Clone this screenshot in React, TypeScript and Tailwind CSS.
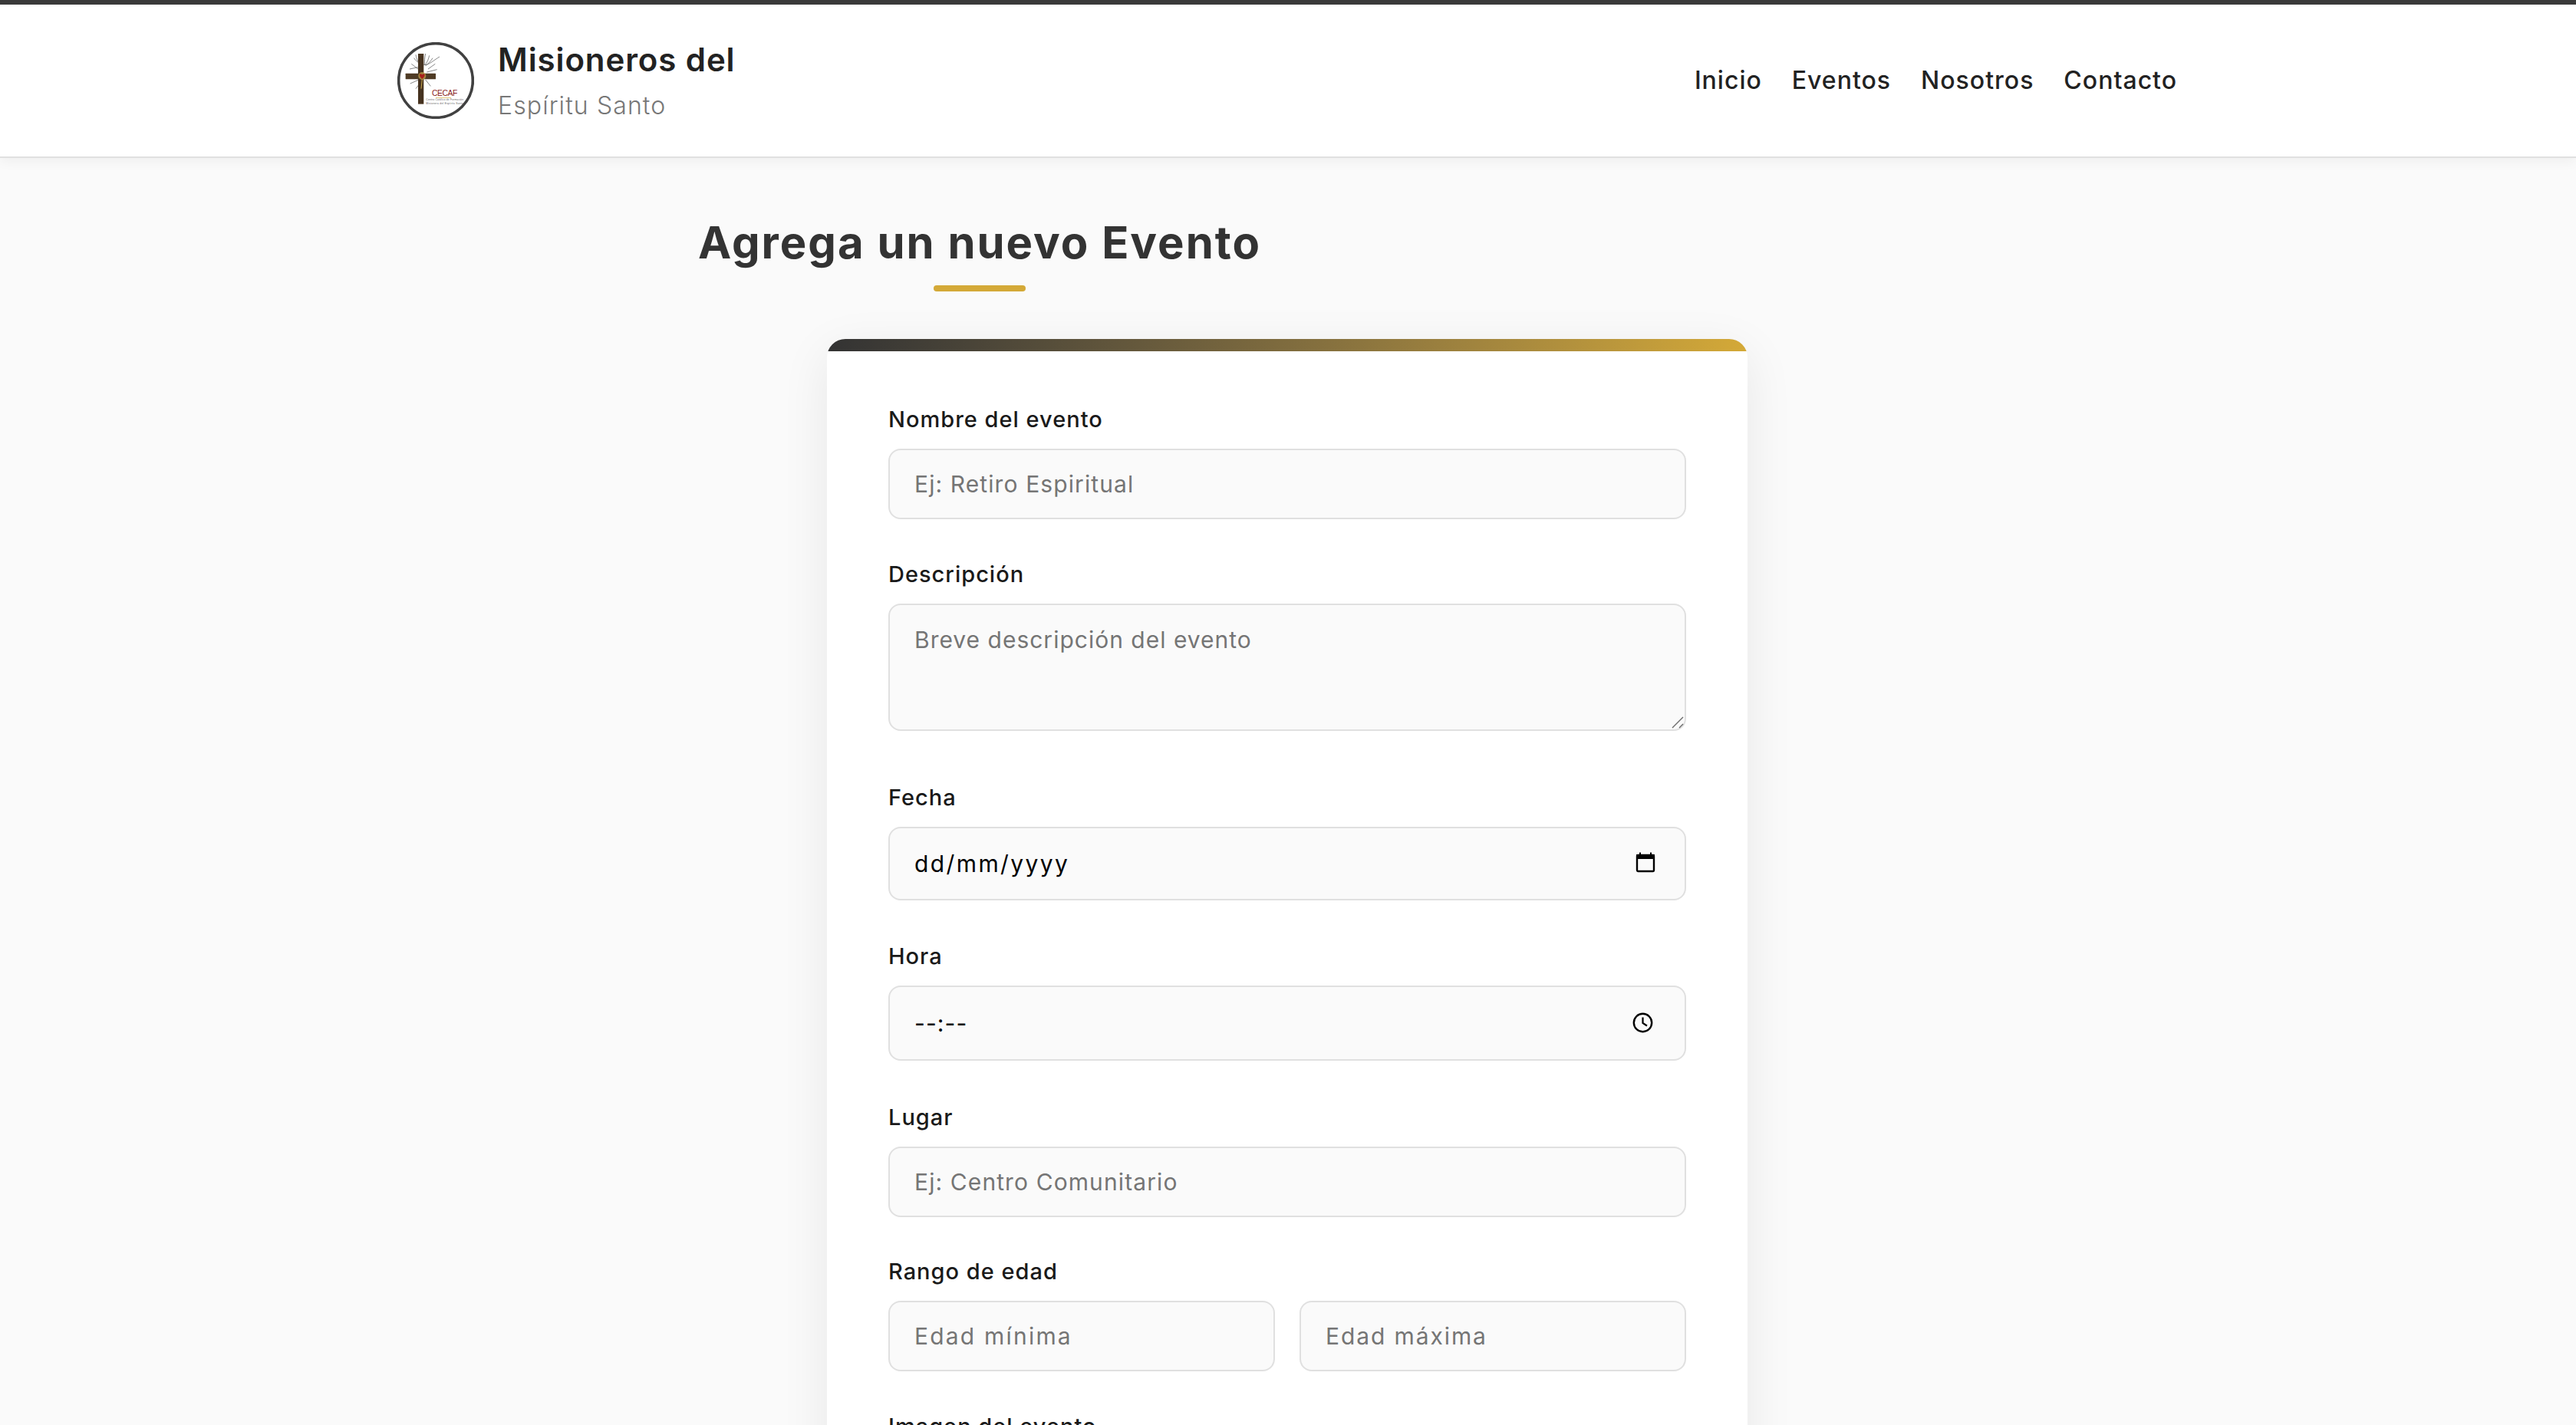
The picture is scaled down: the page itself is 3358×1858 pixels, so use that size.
const FONT = "font-['Inter','Liberation_Sans',sans-serif]";

function Logo() {
  return (
    <svg viewBox="40 43 300 300" className="w-[100px] h-[100px] shrink-0">
      <circle cx="190" cy="193" r="145" fill="#fff" stroke="#414141" strokeWidth="11" />
      <g fill="none" stroke="#4a4a4a" strokeWidth="2">
        <path d="M112 92 C115 110 122 125 135 132 M125 95 C128 112 133 122 140 130 M150 88 C146 105 146 118 146 130 M165 95 C162 110 155 125 147 133 M178 105 C170 118 160 128 150 135" />
        <path d="M105 105 C118 125 135 130 150 132 C165 130 185 112 205 100" />
        <path d="M88 148 L125 140 M95 128 L130 155 M160 148 L188 128 M155 160 L195 150 M90 205 L135 185 M112 225 L135 195 M150 190 L170 215" />
      </g>
      <rect x="121" y="88" width="22" height="197" fill="#4b3722" />
      <rect x="72" y="165" width="118" height="23" rx="2" fill="#4f3b25" />
      <path d="M127 100 V280 M136 95 V282" stroke="#35261a" strokeWidth="2" fill="none" />
      <circle cx="137" cy="175" r="15" fill="#c9a84c" opacity="0.7" />
      <path d="M137 187 C125 178 125 167 131 167 C135 167 137 171 137 171 C137 171 139 167 143 167 C149 167 149 178 137 187 Z" fill="#a8201c" />
      <path d="M137 187 L133 225" stroke="#c9a84c" strokeWidth="3" />
      <text x="175" y="254" fontSize="31" fontFamily="'Liberation Sans',sans-serif" fill="#8a2323" textLength="100">CECAF</text>
      <rect x="190" y="259" width="60" height="2" fill="#d4aa3a" />
      <text x="152" y="272" fontSize="10" fontFamily="'Liberation Sans',sans-serif" fill="#666" textLength="146">Centro Católico de Formación</text>
      <text x="152" y="286" fontSize="10" fontFamily="'Liberation Sans',sans-serif" fill="#666" textLength="146">Misionera del Espíritu Santo</text>
    </svg>
  );
}

function Label({ children }: { children: React.ReactNode }) {
  return <label className="block h-[46px] leading-[47px] mb-[16px] text-[29px] font-medium text-[#1a1a1a] tracking-[1px]">{children}</label>;
}

const inputCls = "w-full h-[92px] px-[32px] bg-[#fafafa] border-2 border-[#e0e0e0] rounded-[16px] text-[30px] tracking-[1.1px] text-black placeholder:text-[#757575] outline-none";

export default function App() {
  return (
    <div className={`h-screen overflow-hidden bg-[#fafafa] ${FONT}`}>
      <header className="relative z-10 h-[206px] border-t-[6px] border-t-[#3a3a3a] border-b-2 border-b-[#e0e0e0] bg-white shadow-[0_4px_16px_rgba(0,0,0,0.05)] pr-[2px]">
        <div className="w-[2400px] h-full mx-auto px-[40px] flex items-center justify-between">
          <div className="flex items-center gap-[31px]">
            <Logo />
            <div>
              <div className="text-[42px] leading-[60px] font-semibold text-[#222] tracking-[0.9px]">Misioneros del</div>
              <div className="text-[32px] leading-[48px] mt-[6px] font-light text-[#777] tracking-[1.1px]">Espíritu Santo</div>
            </div>
          </div>
          <nav className="flex gap-[39px] text-[32px] font-medium text-[#222] tracking-[1px]">
            <a>Inicio</a>
            <a>Eventos</a>
            <a>Nosotros</a>
            <a>Contacto</a>
          </nav>
        </div>
      </header>

      <div className="pr-[2px]">
        <main className="w-[1536px] mx-auto pt-[74px]">
          <h1 className="inline-flex flex-col items-center text-[58px] leading-[72px] font-bold text-[#333] tracking-[2px]">
            Agrega un nuevo Evento
            <span className="block w-[120px] h-[8px] mt-[20px] rounded-[4px] bg-[#d4a937]" />
          </h1>

          <form className="relative w-[1200px] mx-auto mt-[62px] h-[1500px] bg-white rounded-[24px] overflow-hidden px-[80px] pt-[81px] shadow-[0_16px_64px_rgba(0,0,0,0.08)]">
            <div className="absolute top-0 left-0 right-0 h-[16px] bg-gradient-to-r from-[#333333] to-[#d4a937]" />

            <div className="mb-[48px]">
              <Label>Nombre del evento</Label>
              <input className={inputCls} placeholder="Ej: Retiro Espiritual" />
            </div>

            <div className="mb-[63px]">
              <Label>Descripción</Label>
              <div className="relative h-[166px]">
                <textarea className={`${inputCls} !h-[166px] resize-none pt-[23px] block tracking-[1px]`} placeholder="Breve descripción del evento" />
                <svg className="absolute right-[3px] bottom-[3px] w-[16px] h-[16px]" viewBox="0 0 16 16" fill="none" stroke="#6b6b6b" strokeWidth="1.4">
                  <path d="M1 15 L15 1 M10 15 L15 10" />
                </svg>
              </div>
            </div>

            <div className="mb-[49px]">
              <Label>Fecha</Label>
              <div className="relative">
                <input className={`${inputCls} !h-[96px] tracking-[2.4px]`} readOnly value="dd/mm/yyyy" />
                <svg className="absolute right-[40px] top-[33px] w-[26px] h-[27px]" viewBox="0 0 26 27" fill="none">
                  <path d="M2 8 V4 H24 V8 Z" fill="#000" stroke="#000" strokeWidth="2" />
                  <rect x="2" y="4" width="22" height="21" rx="1.5" stroke="#000" strokeWidth="2.4" />
                  <path d="M6 0.5 V4 M20 0.5 V4" stroke="#000" strokeWidth="2" />
                </svg>
              </div>
            </div>

            <div className="mb-[50px]">
              <Label>Hora</Label>
              <div className="relative">
                <input className={`${inputCls} !h-[98px] tracking-[-1px]`} readOnly value="--:--" />
                <svg className="absolute right-[43px] top-[35px] w-[27px] h-[27px]" viewBox="0 0 27 27" fill="none" stroke="#000">
                  <circle cx="13.5" cy="13.5" r="11.7" strokeWidth="2.4" />
                  <path d="M13.5 6.5 V14 L19 17.5" strokeWidth="2.2" />
                </svg>
              </div>
            </div>

            <div className="mb-[47px]">
              <Label>Lugar</Label>
              <input className={inputCls} placeholder="Ej: Centro Comunitario" />
            </div>

            <div className="mb-[48px]">
              <Label>Rango de edad</Label>
              <div className="grid grid-cols-2 gap-[32px]">
                <input className={`${inputCls} tracking-[2.2px]`} placeholder="Edad mínima" />
                <input className={`${inputCls} tracking-[1.9px]`} placeholder="Edad máxima" />
              </div>
            </div>

            <div>
              <Label>Imagen del evento</Label>
            </div>
          </form>
        </main>
      </div>
    </div>
  );
}
